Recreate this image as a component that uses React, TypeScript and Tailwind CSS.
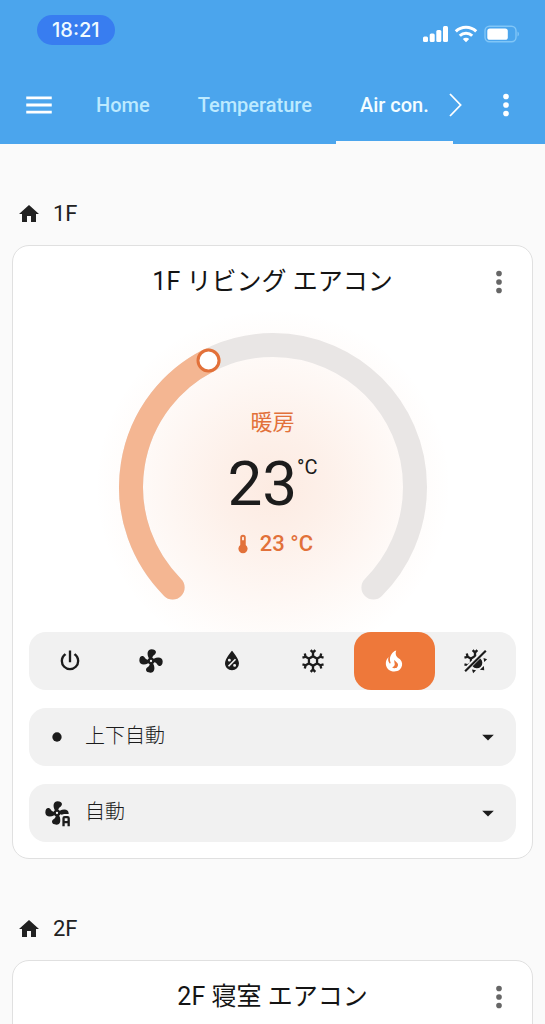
import { useState } from "react";
import type { ReactNode } from "react";
import clsx from "clsx";

const ICONS = {
  menu: "M3,6H21V8H3V6M3,11H21V13H3V11M3,16H21V18H3V16Z",
  dots: "M12,16A2,2 0 0,1 14,18A2,2 0 0,1 12,20A2,2 0 0,1 10,18A2,2 0 0,1 12,16M12,10A2,2 0 0,1 14,12A2,2 0 0,1 12,14A2,2 0 0,1 10,12A2,2 0 0,1 12,10M12,4A2,2 0 0,1 14,6A2,2 0 0,1 12,8A2,2 0 0,1 10,6A2,2 0 0,1 12,4Z",
  home: "M10,20V14H14V20H19V12H22L12,3L2,12H5V20H10Z",
  power:
    "M16.56,5.44L15.11,6.89C16.84,7.94 18,9.83 18,12A6,6 0 0,1 12,18A6,6 0 0,1 6,12C6,9.83 7.16,7.94 8.88,6.88L7.44,5.44C5.36,6.88 4,9.28 4,12A8,8 0 0,0 12,20A8,8 0 0,0 20,12C20,9.28 18.64,6.88 16.56,5.44M13,3H11V13H13",
  fan: "M12,11A1,1 0 0,0 11,12A1,1 0 0,0 12,13A1,1 0 0,0 13,12A1,1 0 0,0 12,11M12.5,2C17,2 17.11,5.57 14.75,6.75C13.76,7.24 13.32,8.29 13.13,9.22C13.61,9.42 14.03,9.73 14.35,10.13C18.05,8.13 22.03,8.92 22.03,12.5C22.03,17 18.46,17.1 17.28,14.73C16.78,13.74 15.72,13.3 14.79,13.11C14.59,13.59 14.28,14 13.88,14.34C15.87,18.03 15.08,22 11.5,22C7,22 6.91,18.42 9.27,17.24C10.25,16.75 10.69,15.71 10.89,14.79C10.4,14.59 9.97,14.27 9.65,13.87C5.96,15.85 2,15.07 2,11.5C2,7 5.56,6.89 6.74,9.26C7.24,10.25 8.29,10.68 9.22,10.87C9.41,10.39 9.73,9.97 10.14,9.65C8.15,5.96 8.94,2 12.5,2Z",
  dry: "M12,3.25C12,3.25 6,10 6,14C6,17.32 8.69,20 12,20A6,6 0 0,0 18,14C18,10 12,3.25 12,3.25M14.47,9.97L15.53,11.03L9.53,17.03L8.47,15.97M9.75,10A1.25,1.25 0 0,1 11,11.25A1.25,1.25 0 0,1 9.75,12.5A1.25,1.25 0 0,1 8.5,11.25A1.25,1.25 0 0,1 9.75,10M14.25,14.5A1.25,1.25 0 0,1 15.5,15.75A1.25,1.25 0 0,1 14.25,17A1.25,1.25 0 0,1 13,15.75A1.25,1.25 0 0,1 14.25,14.5Z",
  cool: "M20.79,13.95L18.46,14.57L16.46,13.44V10.56L18.46,9.43L20.79,10.05L21.31,8.12L19.54,7.65L20,5.88L18.07,5.36L17.45,7.69L15.45,8.82L13,7.38V5.12L14.71,3.41L13.29,2L12,3.29L10.71,2L9.29,3.41L11,5.12V7.38L8.5,8.82L6.5,7.69L5.92,5.36L4,5.88L4.47,7.65L2.7,8.12L3.22,10.05L5.55,9.43L7.55,10.56V13.45L5.55,14.58L3.22,13.96L2.7,15.89L4.47,16.36L4,18.12L5.93,18.64L6.55,16.31L8.55,15.18L11,16.62V18.88L9.29,20.59L10.71,22L12,20.71L13.29,22L14.7,20.59L13,18.88V16.62L15.5,15.17L17.5,16.3L18.12,18.63L20,18.12L19.53,16.35L21.3,15.88L20.79,13.95M9.5,10.56L12,9.11L14.5,10.56V13.44L12,14.89L9.5,13.44V10.56Z",
  heat: "M17.66,11.2C17.43,10.9 17.15,10.64 16.89,10.38C16.22,9.78 15.46,9.35 14.82,8.72C13.33,7.26 13,4.85 13.95,3C13,3.23 12.17,3.75 11.46,4.32C8.87,6.4 7.85,10.07 9.07,13.22C9.11,13.32 9.15,13.42 9.15,13.55C9.15,13.77 9,13.97 8.8,14.05C8.57,14.15 8.33,14.09 8.14,13.93C8.08,13.88 8.04,13.83 8,13.76C6.87,12.33 6.69,10.28 7.45,8.64C5.78,10 4.87,12.3 5,14.47C5.06,14.97 5.12,15.47 5.29,15.97C5.43,16.57 5.7,17.17 6,17.7C7.08,19.43 8.95,20.67 10.96,20.92C13.1,21.19 15.39,20.8 17.03,19.32C18.86,17.66 19.5,15 18.56,12.72L18.43,12.46C18.22,12 17.66,11.2 17.66,11.2M14.5,17.5C14.22,17.74 13.76,18 13.4,18.1C12.28,18.5 11.16,17.94 10.5,17.28C11.69,17 12.4,16.12 12.61,15.23C12.78,14.43 12.46,13.77 12.33,13C12.21,12.26 12.23,11.63 12.5,10.94C12.69,11.32 12.89,11.7 13.13,12C13.9,13 15.11,13.44 15.37,14.8C15.41,14.94 15.43,15.08 15.43,15.23C15.46,16.05 15.1,16.95 14.5,17.5H14.5Z",
  dot: "M12,8A4,4 0 0,0 8,12A4,4 0 0,0 12,16A4,4 0 0,0 16,12A4,4 0 0,0 12,8Z",
  caret: "M7,10L12,15L17,10H7Z",
  thermometer:
    "M15,13V5A3,3 0 0,0 9,5V13A5,5 0 1,0 15,13M12,4A1,1 0 0,1 13,5V8H11V5A1,1 0 0,1 12,4Z",
};

type IconName = keyof typeof ICONS;

function Icon({ name, className }: { name: IconName; className?: string }) {
  return (
    <svg viewBox="0 0 24 24" fill="currentColor" fillRule="evenodd" className={className} aria-hidden="true">
      <path d={ICONS[name]} />
    </svg>
  );
}

// fan with an "A" badge in the lower right corner
function FanAutoIcon() {
  return (
    <svg viewBox="0 0 24 24" fill="currentColor" fillRule="evenodd" className="size-7 shrink-0" aria-hidden="true">
      <clipPath id="fan-cut">
        <path d="M0 0H24V12.8H18.5Q15.2 12.8 15.2 16V24H0Z" />
      </clipPath>
      <path d={ICONS.fan} clipPath="url(#fan-cut)" />
      <path d="M18.6 14.6H21A2 2 0 0 1 23 16.6V23.4H21V20.8H18.6V23.4H16.6V16.6A2 2 0 0 1 18.6 14.6M18.6 16.6V18.8H21V16.6Z" />
    </svg>
  );
}

// half snowflake, half sun
function HeatCoolIcon() {
  return (
    <svg viewBox="0 0 24 24" fill="currentColor" className="size-7" aria-hidden="true">
      <clipPath id="cool-half">
        <path d="M0 0H20.8L0 20.8Z" />
      </clipPath>
      <path d={ICONS.cool} fillRule="evenodd" clipPath="url(#cool-half)" />
      <path d="M20.6 2.5L21.9 3.8L4.2 21.5L2.9 20.2Z" />
      <path d="M16.5 9.9A4.7 4.7 0 1 1 9.9 16.5Z" />
      <path d="M19.3 9.4L22.4 10.4L19.9 12.9Z M19.6 16.2L19.9 19.9L16.2 19.6Z M12.9 19.9L10.4 22.4L9.4 19.3Z" />
    </svg>
  );
}

const TABS = ["Home", "Temperature", "Air con."];

const MODES: { key: string; label: string; icon: ReactNode }[] = [
  { key: "off", label: "オフ", icon: <Icon name="power" className="size-7" /> },
  { key: "fan_only", label: "送風", icon: <Icon name="fan" className="size-7" /> },
  { key: "dry", label: "除湿", icon: <Icon name="dry" className="size-7" /> },
  { key: "cool", label: "冷房", icon: <Icon name="cool" className="size-7" /> },
  { key: "heat", label: "暖房", icon: <Icon name="heat" className="size-7" /> },
  { key: "heat_cool", label: "冷暖房", icon: <HeatCoolIcon /> },
];

function StatusBar() {
  return (
    <div className="flex h-[66px] items-start justify-between pr-[25px] pl-[37px] pt-[15px]">
      <span className="rounded-full bg-[#387df0] px-[15px] font-['Inter',sans-serif] text-[20px] leading-[30px] font-medium text-[#effbff]">
        18:21
      </span>
      <div className="flex items-center gap-[6px] pt-[10px] text-white">
        <svg viewBox="0 0 25 18" fill="currentColor" className="h-[18px] w-[25px]" aria-hidden="true">
          <rect x="0" y="11.5" width="5" height="5.5" rx="1.5" />
          <rect x="6.7" y="8.5" width="5" height="8.5" rx="1.5" />
          <rect x="13.3" y="5" width="5" height="12" rx="1.5" />
          <rect x="20" y="1" width="5" height="16" rx="1.5" />
        </svg>
        <svg viewBox="0 0 24 18" fill="none" stroke="currentColor" strokeWidth="3" className="h-[18px] w-6" aria-hidden="true">
          <path d="M1.8 6.4A14.6 14.6 0 0 1 22.2 6.4" />
          <path d="M5.8 10.8A8.8 8.8 0 0 1 18.2 10.8" />
          <path d="M12 17.2L8.8 14A4.6 4.6 0 0 1 15.2 14Z" fill="currentColor" stroke="none" />
        </svg>
        <svg viewBox="0 0 36 18" className="h-[18px] w-9" aria-hidden="true">
          <rect x="1" y="1.2" width="31" height="15.6" rx="4.5" fill="none" stroke="#80c6f7" strokeWidth="1.4" />
          <rect x="3.3" y="3.4" width="20.5" height="11.4" rx="2.6" fill="#fff" />
          <path d="M33.5 6.5A2.8 2.8 0 0 1 33.5 11.5Z" fill="#80c6f7" />
        </svg>
      </div>
    </div>
  );
}

function Dial() {
  return (
    <div className="grid justify-items-center">
      <svg viewBox="0 0 308 282" className="col-start-1 row-start-1 w-[308px] overflow-visible" aria-hidden="true">
        <defs>
          <radialGradient id="glow">
            <stop offset="0" stopColor="#ee783a" stopOpacity="0.15" />
            <stop offset="0.3" stopColor="#ee783a" stopOpacity="0.11" />
            <stop offset="0.6" stopColor="#ee783a" stopOpacity="0.06" />
            <stop offset="0.85" stopColor="#ee783a" stopOpacity="0.02" />
            <stop offset="1" stopColor="#ee783a" stopOpacity="0" />
          </radialGradient>
        </defs>
        <circle cx="154" cy="154" r="178" fill="url(#glow)" />
        <g fill="none" strokeWidth="24" strokeLinecap="round">
          <path d="M53.6 254.4A142 142 0 1 1 254.4 254.4" stroke="#e9e6e5" />
          <path d="M53.6 254.4A142 142 0 0 1 89.5 27.5" stroke="#f4b692" />
        </g>
        <circle cx="89.5" cy="27.5" r="10.5" fill="#fff" stroke="#e2713a" strokeWidth="3" />
      </svg>
      <div className="z-10 col-start-1 row-start-1 flex flex-col items-center pt-[75px] text-[#e2713a]">
        <span className="text-[22px] leading-[30px]">暖房</span>
        <span className="mt-[13px] flex items-start text-[#1c1c1c]">
          <span className="text-[62px] leading-[66px]">23</span>
          <span className="pt-1 text-[20px] leading-6">°C</span>
        </span>
        <span className="mt-[14px] flex items-center gap-[6px] text-[22px] leading-[26px] font-medium">
          <Icon name="thermometer" className="size-[22px]" />
          23 °C
        </span>
      </div>
    </div>
  );
}

function Dropdown({ label, icon, options }: { label: string; icon: ReactNode; options: string[] }) {
  return (
    <label className="flex h-[58px] items-center rounded-[17px] bg-[#f1f1f1] px-[14px] text-[#1c1c1c]">
      {icon}
      <select
        aria-label={label}
        className="h-full min-w-0 flex-1 appearance-none bg-transparent pb-[2px] pl-[14px] text-[20px] font-light outline-none"
      >
        {options.map((o) => (
          <option key={o}>{o}</option>
        ))}
      </select>
      <Icon name="caret" className="pointer-events-none size-7 shrink-0" />
    </label>
  );
}

function ClimateControls() {
  const [mode, setMode] = useState("heat");

  return (
    <>
      <div className="mt-[33px]">
        <Dial />
      </div>
      <div className="mt-[17px] flex flex-col gap-[18px]">
        <div role="group" aria-label="運転モード" className="grid h-[58px] grid-cols-6 rounded-[17px] bg-[#f1f1f1]">
          {MODES.map((m) => (
            <button
              key={m.key}
              type="button"
              aria-label={m.label}
              aria-pressed={m.key === mode}
              onClick={() => setMode(m.key)}
              className={clsx(
                "z-10 flex items-center justify-center rounded-[17px]",
                m.key === mode ? "bg-[#ee783a] text-white" : "text-[#1c1c1c]"
              )}
            >
              {m.icon}
            </button>
          ))}
        </div>
        <Dropdown label="風向" icon={<Icon name="dot" className="size-7 shrink-0" />} options={["上下自動", "停止"]} />
        <Dropdown label="風量" icon={<FanAutoIcon />} options={["自動", "弱", "強"]} />
      </div>
    </>
  );
}

function Floor({ name, title, children }: { name: string; title: string; children?: ReactNode }) {
  return (
    <section>
      <h2 className="flex items-center gap-3 px-[5px] pt-[54px] pb-[15px] text-[22px] leading-8 text-[#212121]">
        <Icon name="home" className="size-6" />
        {name}
      </h2>
      <article className="min-h-24 rounded-[17px] border border-[#e0e0e0] bg-white px-4 pb-4">
        <header className="grid grid-cols-[34px_1fr_34px] items-center pt-[18px]">
          <h3 className="col-start-2 text-center text-[25px] leading-9 text-[#141414]">{title}</h3>
          <button type="button" aria-label="詳細" className="text-[#666]">
            <Icon name="dots" className="size-[34px]" />
          </button>
        </header>
        {children}
      </article>
    </section>
  );
}

export default function App() {
  const [tab, setTab] = useState("Air con.");

  return (
    <div className="min-h-screen bg-[#fafafa] font-['Roboto','Noto_Sans_CJK_JP',sans-serif]">
      <header className="bg-[#4ba5ed]">
        <StatusBar />
        <div className="flex h-[78px] items-center px-[22px] text-white">
          <button type="button" aria-label="メニュー" className="mr-4 shrink-0">
            <Icon name="menu" className="size-[34px]" />
          </button>
          <nav className="flex h-full">
            {TABS.map((t) => (
              <button
                key={t}
                type="button"
                onClick={() => setTab(t)}
                className={clsx(
                  "border-y-[3px] border-t-transparent px-6 text-[20px] font-medium whitespace-nowrap",
                  t === tab ? "border-b-[#fafafa] text-[#f4fdff]" : "border-b-transparent text-[#bdeaff]"
                )}
              >
                {t}
              </button>
            ))}
          </nav>
          <button type="button" aria-label="次のタブ" className="-ml-1 shrink-0">
            <svg viewBox="0 0 13 26" fill="none" stroke="currentColor" strokeWidth="1.8" className="h-[26px] w-[13px]" aria-hidden="true">
              <path d="M1 2L11.6 13L1 24" />
            </svg>
          </button>
          <button type="button" aria-label="その他" className="ml-auto shrink-0">
            <Icon name="dots" className="size-[34px]" />
          </button>
        </div>
      </header>
      <main className="px-3">
        <Floor name="1F" title="1F リビング エアコン">
          <ClimateControls />
        </Floor>
        <Floor name="2F" title="2F 寝室 エアコン" />
      </main>
    </div>
  );
}
